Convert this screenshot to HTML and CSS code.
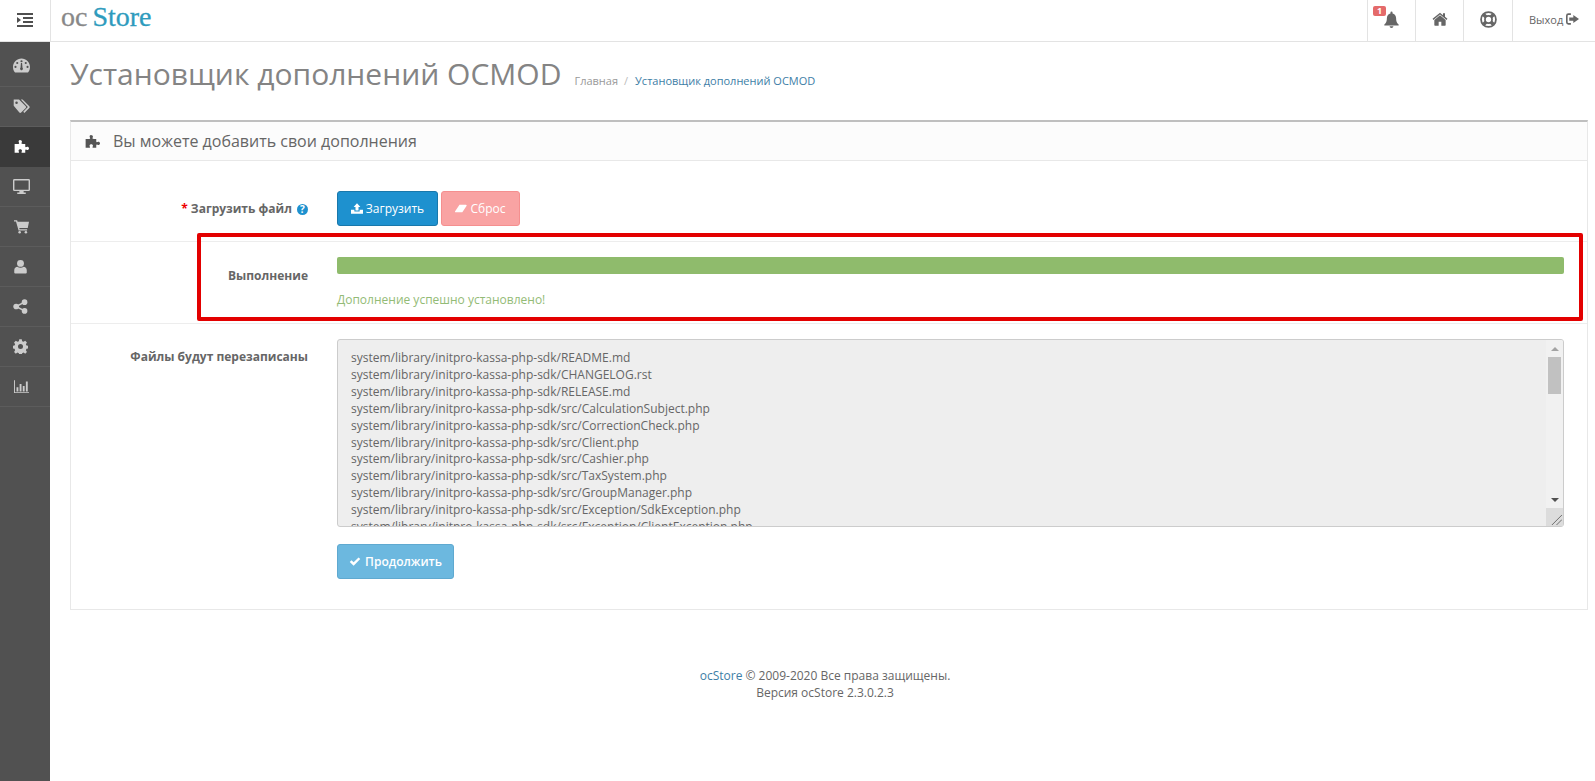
FILE: index.html
```html
<!DOCTYPE html>
<html lang="ru">
<head>
    <meta charset="UTF-8">
    <title>Установщик дополнений OCMOD</title>
    <link rel="stylesheet" href="styles.css">
</head>
<body>

    <header class="topbar">
        <div class="menu-toggle">
            <svg class="icon-toggle" viewBox="0 0 16 14"><path d="M0 0h16v2H0zM6 4h10v2H6zM6 8h10v2H6zM0 12h16v2H0zM0 4l4 3-4 3z"/></svg>
        </div>
        <div class="logo"><span class="logo-oc">oc</span><span class="logo-store">Store</span></div>
        <ul class="top-nav">
            <li class="top-item top-bell">
                <span class="badge">1</span>
                <svg class="icon-top" viewBox="0 0 24 24"><path d="M12 24c1.500 0 2.600-1.100 2.600-2.400H9.400C9.400 22.900 10.500 24 12 24zM22 19c-1.800-1.600-3.500-3.500-3.500-9 0-3.400-2.300-5.800-5-6.500V2.300a1.500 1.500 0 0 0-3 0v1.200c-2.700.7-5 3.100-5 6.500 0 5.500-1.700 7.400-3.500 9-.5.500-.2 1.400.5 1.400h19c.7 0 1-.9.500-1.400z"/></svg>
            </li>
            <li class="top-item top-home">
                <svg class="icon-top" viewBox="0 0 24 24"><path d="M12 6.500 3.500 13.500V21a1 1 0 0 0 1 1h5.500v-6h4v6h5.500a1 1 0 0 0 1-1v-7.500z"/><path d="M12 2.500 0.800 11.800l1.400 1.700L12 5.400l9.800 8.100 1.400-1.700L19.500 8.700V3.500h-3v2.700z"/></svg>
            </li>
            <li class="top-item top-help">
                <svg class="icon-top icon-ring" viewBox="0 0 24 24"><circle cx="12" cy="12" r="10.500" stroke-width="2.500"/><circle cx="12" cy="12" r="5" stroke-width="2.500"/><path d="M5 5l3.500 3.500M19 5l-3.500 3.500M5 19l3.500-3.500M19 19l-3.500-3.500" stroke-width="5"/></svg>
            </li>
            <li class="top-item top-logout">
                <span>Выход</span>
                <svg class="icon-logout" viewBox="0 0 16 14"><path d="M6 0v2H3a1 1 0 0 0-1 1v8a1 1 0 0 0 1 1h3v2H3a3 3 0 0 1-3-3V3a3 3 0 0 1 3-3zM9 2l7 5-7 5V9H4V5h5z"/></svg>
            </li>
        </ul>
    </header>

    <div class="wrapper">
        <nav class="sidebar">
            <a class="side-item side-first">
                <svg class="icon-side" viewBox="0 0 24 20"><path fill-rule="evenodd" d="M12 0C5.400 0 0 5.400 0 12c0 2.900 1 5.600 2.600 7.600a1 1 0 0 0 .8.400h17.200a1 1 0 0 0 .8-.4C23 17.600 24 14.900 24 12 24 5.400 18.600 0 12 0zM12 2.500a1.500 1.500 0 1 1 0 3 1.500 1.500 0 0 1 0-3zM6 5a1.500 1.500 0 1 1 0 3 1.500 1.500 0 0 1 0-3zM18 5a1.500 1.500 0 1 1 0 3 1.500 1.500 0 0 1 0-3zM3.500 10.500a1.500 1.500 0 1 1 0 3 1.500 1.500 0 0 1 0-3zM20.500 10.500a1.500 1.500 0 1 1 0 3 1.500 1.500 0 0 1 0-3zM11.200 6.500h1.600l.6 6.800a2 2 0 1 1-2.800 0z"/></svg>
            </a>
            <a class="side-item">
                <svg class="icon-side" viewBox="0 0 24 20"><path fill-rule="evenodd" d="M1 0h7.500L18 9.500a1.800 1.800 0 0 1 0 2.500L11.500 18.500a1.800 1.800 0 0 1-2.500 0L1 9zM5 3a1.800 1.800 0 1 0 0 3.600A1.800 1.800 0 0 0 5 3z"/><path d="M11 0h2.500L23 9.500a1.800 1.800 0 0 1 0 2.500L16 19l-1.500-1.500 6.500-6.700z"/></svg>
            </a>
            <a class="side-item side-active">
                <svg class="icon-side" viewBox="0 0 24 24"><path d="M9.500 1.500c2 0 3.200 1.300 3.200 2.800 0 1-.8 1.600-.8 2.600 0 .5.900 1 2 1H18v4.200c0 .8.500 1.100 1 1.100.8 0 1.200-.7 2.300-.7 1.500 0 2.700 1.100 2.700 2.500s-1.200 2.500-2.700 2.500c-1.100 0-1.500-.7-2.300-.7-.5 0-1 .3-1 1.100V22h-5c-.6 0-1-.4-1-1 0-.8.700-1.200.7-2.200 0-1.300-1.200-2.300-2.700-2.300s-2.700 1-2.700 2.300c0 1 .7 1.400.7 2.200 0 .6-.4 1-1 1H1V8h5.300c1.200 0 2-.5 2-1.100 0-1-.9-1.600-.9-2.600C7.400 2.800 8 1.500 9.500 1.500z"/></svg>
            </a>
            <a class="side-item">
                <svg class="icon-side" viewBox="0 0 24 21"><path fill-rule="evenodd" d="M2 0h20a2 2 0 0 1 2 2v13a2 2 0 0 1-2 2h-7v2h3v2H6v-2h3v-2H2a2 2 0 0 1-2-2V2a2 2 0 0 1 2-2zM2 2v13h20V2z"/></svg>
            </a>
            <a class="side-item">
                <svg class="icon-side" viewBox="0 0 24 24"><path d="M0 2h5l.8 2.500H24l-2 10H8.500l.4 1.800H21v2H7.300L3.200 4H0z"/><circle cx="9" cy="21" r="2"/><circle cx="19" cy="21" r="2"/></svg>
            </a>
            <a class="side-item">
                <svg class="icon-side icon-narrow" viewBox="0 0 24 24"><circle cx="12" cy="7" r="5.500"/><path d="M2 22v-4c0-3.500 2.500-5.500 5-5.500 1.300 1 3 1.500 5 1.500s3.700-.5 5-1.500c2.500 0 5 2 5 5.500v4a1.500 1.500 0 0 1-1.500 1h-17A1.500 1.500 0 0 1 2 22z"/></svg>
            </a>
            <a class="side-item">
                <svg class="icon-side icon-narrow" viewBox="0 0 24 24"><circle cx="5" cy="12" r="4.500"/><circle cx="18.500" cy="5" r="4.500"/><circle cx="18.500" cy="19" r="4.500"/><path d="M5 12 18.500 5M5 12l13.500 7" stroke="#ccc" stroke-width="2.500"/></svg>
            </a>
            <a class="side-item">
                <svg class="icon-side icon-narrow" viewBox="0 0 24 24"><path fill-rule="evenodd" d="M10 1h4l.6 3 2.300 1 2.600-1.700 2.800 2.800-1.700 2.600 1 2.300 3 .6v4l-3 .6-1 2.300 1.700 2.600-2.800 2.800-2.600-1.700-2.300 1-.6 3h-4l-.6-3-2.300-1-2.600 1.700-2.800-2.800 1.700-2.600-1-2.300-3-.6v-4l3-.6 1-2.300-1.700-2.600 2.800-2.800 2.600 1.700 2.300-1zM12 8.500a4 4 0 1 0 0 8 4 4 0 0 0 0-8z" transform="translate(0 -.5)"/></svg>
            </a>
            <a class="side-item">
                <svg class="icon-side" viewBox="0 0 24 24"><path d="M0 2h1.500v19H24v1.500H0zM4 13h3v7H4zM9 8h3v12H9zM14 11h3v9h-3zM19 4h3v16h-3z"/></svg>
            </a>
        </nav>

        <main class="content">
            <div class="page-header">
                <h1>Установщик дополнений OCMOD</h1>
                <ul class="breadcrumb">
                    <li>Главная</li>
                    <li class="crumb-sep">/</li>
                    <li class="crumb-link">Установщик дополнений OCMOD</li>
                </ul>
            </div>

            <section class="panel">
                <div class="panel-heading">
                    <svg class="icon-panel" viewBox="0 0 24 24"><path d="M9.500 1.500c2 0 3.200 1.300 3.200 2.800 0 1-.8 1.600-.8 2.600 0 .5.900 1 2 1H18v4.200c0 .8.500 1.100 1 1.100.8 0 1.200-.7 2.300-.7 1.500 0 2.700 1.100 2.700 2.500s-1.200 2.500-2.700 2.500c-1.100 0-1.500-.7-2.300-.7-.5 0-1 .3-1 1.100V22h-5c-.6 0-1-.4-1-1 0-.8.700-1.200.7-2.200 0-1.300-1.200-2.300-2.700-2.300s-2.700 1-2.700 2.300c0 1 .7 1.400.7 2.200 0 .6-.4 1-1 1H1V8h5.300c1.200 0 2-.5 2-1.100 0-1-.9-1.600-.9-2.600C7.400 2.800 8 1.500 9.500 1.500z"/></svg>
                    <h3>Вы можете добавить свои дополнения</h3>
                </div>

                <div class="form-row form-row-upload">
                    <div class="form-label"><span class="required">*</span> Загрузить файл <span class="help">?</span></div>
                    <div class="form-control">
                        <div class="btn-group">
                            <button class="btn btn-primary" type="button">
                                <svg class="icon-btn" viewBox="0 0 16 14"><path d="M8 0l4.500 5H10v4.500H6V5H3.500zM0 8.500h4.500v2.500h7V8.500H16V14H0z"/></svg>
                                Загрузить
                            </button>
                            <button class="btn btn-danger" type="button">
                                <svg class="icon-btn" viewBox="0 0 16 14"><path d="M6 2h8.500a1 1 0 0 1 .8 1.500L10 11.500a1 1 0 0 1-.8.500H1a1 1 0 0 1-.8-1.500z"/></svg>
                                Сброс
                            </button>
                        </div>
                    </div>
                </div>

                <div class="form-row form-row-progress">
                    <div class="form-label">Выполнение</div>
                    <div class="form-control">
                        <div class="progress"></div>
                        <div class="progress-text">Дополнение успешно установлено!</div>
                    </div>
                </div>

                <div class="form-row form-row-files">
                    <div class="form-label">Файлы будут перезаписаны</div>
                    <div class="form-control">
                        <div class="file-box">
                            <textarea class="file-list" readonly>system/library/initpro-kassa-php-sdk/README.md
system/library/initpro-kassa-php-sdk/CHANGELOG.rst
system/library/initpro-kassa-php-sdk/RELEASE.md
system/library/initpro-kassa-php-sdk/src/CalculationSubject.php
system/library/initpro-kassa-php-sdk/src/CorrectionCheck.php
system/library/initpro-kassa-php-sdk/src/Client.php
system/library/initpro-kassa-php-sdk/src/Cashier.php
system/library/initpro-kassa-php-sdk/src/TaxSystem.php
system/library/initpro-kassa-php-sdk/src/GroupManager.php
system/library/initpro-kassa-php-sdk/src/Exception/SdkException.php
system/library/initpro-kassa-php-sdk/src/Exception/ClientException.php
system/library/initpro-kassa-php-sdk/src/Exception/NetworkException.php
system/library/initpro-kassa-php-sdk/src/Exception/ServerException.php</textarea>
                            <div class="scrollbar">
                                <div class="scroll-btn"><span class="arrow-up"></span></div>
                                <div class="scroll-thumb"></div>
                                <div class="scroll-btn scroll-btn-down"><span class="arrow-down"></span></div>
                                <div class="scroll-corner">
                                    <svg class="icon-grip" viewBox="0 0 12 12"><path d="M1 12 12 1M6 12l6-6"/></svg>
                                </div>
                            </div>
                        </div>
                        <button class="btn btn-continue" type="button">
                            <svg class="icon-btn" viewBox="0 0 16 14"><path d="M1 7.500l2.300-2.300 2.900 2.900 6.500-6.600L15 3.800 6.200 12.600z"/></svg>
                            Продолжить
                        </button>
                    </div>
                </div>

                <div class="highlight"></div>
            </section>

            <footer class="footer">
                <a>ocStore</a> © 2009-2020 Все права защищены.<br>Версия ocStore 2.3.0.2.3
            </footer>
        </main>
    </div>

</body>
</html>
```

FILE: styles.css
```css
* {
    box-sizing: border-box;
}

body {
    margin: 0;
    font-family: 'Open Sans', sans-serif;
    font-size: 12px;
    line-height: 17px;
    color: #666;
    background-color: #fff;
    overflow: hidden;
}

ul {
    list-style: none;
    margin: 0;
    padding: 0;
}

svg {
    fill: currentColor;
    flex-shrink: 0;
}

/* top bar */
.topbar {
    display: flex;
    align-items: stretch;
    height: 42px;
    border-bottom: 1px solid #e3e3e3;
}

.menu-toggle {
    width: 51px;
    border-right: 1px solid #e3e3e3;
    display: flex;
    align-items: center;
    justify-content: center;
    padding-bottom: 2px;
    color: #4f4f4f;
}

.icon-toggle {
    width: 16px;
    height: 14px;
}

.logo {
    padding-left: 10px;
    font-family: 'Liberation Serif', serif;
    font-size: 28px;
    line-height: 33px;
}

.logo-oc {
    color: #888;
    margin-right: 5px;
    -webkit-text-stroke: 0.3px #888;
}

.logo-store {
    color: #2e9bbd;
    -webkit-text-stroke: 0.3px #2e9bbd;
}

.top-nav {
    display: flex;
    margin-left: auto;
}

.top-item {
    position: relative;
    display: flex;
    align-items: center;
    justify-content: center;
    padding-bottom: 3px;
    border-left: 1px solid #e3e3e3;
    color: #666;
}

.top-bell {
    width: 48px;
}

.top-home {
    width: 48px;
}

.top-help {
    width: 49px;
}

.top-logout {
    width: 83px;
    gap: 3px;
    justify-content: flex-start;
    padding-left: 16px;
    font-size: 11px;
}

.icon-top {
    width: 16px;
    height: 16px;
}

.top-bell .icon-top {
    width: 17px;
    height: 17px;
}

.top-help .icon-top {
    width: 17px;
    height: 17px;
}

.icon-ring {
    fill: none;
    stroke: #666;
}

.icon-logout {
    width: 13px;
    height: 12px;
}

.badge {
    position: absolute;
    left: 5px;
    top: 6px;
    width: 13px;
    height: 10px;
    border-radius: 2px;
    background-color: #e46a6a;
    color: #fff;
    font-size: 9px;
    font-weight: 700;
    line-height: 10px;
    text-align: center;
    z-index: 1;
}

/* sidebar */
.wrapper {
    display: flex;
    height: 739px;
}

.sidebar {
    width: 50px;
    background-color: #515151;
    flex-shrink: 0;
}

.side-item {
    display: flex;
    align-items: center;
    height: 40px;
    padding-left: 13px;
    border-bottom: 1px solid #5c5c5c;
    color: #ccc;
}

.side-first {
    height: 45px;
    padding-top: 3px;
}

.side-active {
    background-color: #3a3a3a;
    color: #fff;
    border-bottom-color: #3a3a3a;
}

.icon-side {
    width: 17px;
    height: 15px;
}

.icon-narrow {
    width: 15px;
}

/* content */
.content {
    flex: 1;
    padding: 0 7px 0 20px;
    min-width: 0;
}

.page-header {
    display: flex;
    align-items: baseline;
    height: 78px;
    padding-top: 11px;
}

.page-header h1 {
    margin: 0;
    font-size: 30px;
    font-weight: 400;
    line-height: 42px;
    color: #848484;
}

.breadcrumb {
    display: flex;
    gap: 6px;
    margin-left: 13px;
    font-size: 11px;
    color: #999;
}

.crumb-sep {
    color: #bbb;
}

.crumb-link {
    color: #3d7ea6;
    margin-left: 1px;
}

.panel {
    position: relative;
    border: 1px solid #e8e8e8;
    border-top: 2px solid #bfbfbf;
    height: 490px;
}

.panel-heading {
    display: flex;
    align-items: center;
    gap: 13px;
    height: 39px;
    padding-left: 14px;
    background-color: #fcfcfc;
    border-bottom: 1px solid #e8e8e8;
    color: #555;
}

.icon-panel {
    width: 15px;
    height: 15px;
}

.panel-heading h3 {
    margin: 0;
    font-size: 16px;
    font-weight: 400;
    color: #666;
}

.form-row {
    display: flex;
    border-top: 1px solid #ededed;
}

.form-row-upload {
    height: 80px;
    padding-top: 30px;
    border-top: none;
}

.form-row-progress {
    height: 82px;
    padding-top: 15px;
}

.form-row-files {
    padding-top: 15px;
}

.form-label {
    width: 237px;
    flex-shrink: 0;
    padding-top: 9px;
    text-align: right;
    font-size: 12px;
    font-weight: 700;
    color: #666;
}

.form-row-progress .form-label {
    padding-top: 10px;
}

.required {
    color: #e00;
}

.help {
    display: inline-block;
    width: 11px;
    height: 11px;
    margin-left: 2px;
    border-radius: 50%;
    background-color: #1e91cf;
    color: #fff;
    font-size: 10px;
    line-height: 11px;
    text-align: center;
}

.form-control {
    flex: 1;
    min-width: 0;
    margin-left: 29px;
    margin-right: 23px;
}

.btn-group {
    display: flex;
    gap: 3px;
}

.btn {
    display: flex;
    align-items: center;
    justify-content: center;
    gap: 3px;
    height: 35px;
    padding: 0;
    font-family: 'Open Sans', sans-serif;
    font-size: 12px;
    color: #fff;
    border-radius: 3px;
    border: 1px solid;
}

.btn-primary {
    width: 101px;
    background-color: #1e91cf;
    border-color: #1978ab;
}

.btn-danger {
    width: 79px;
    background-color: #f9a3a3;
    border-color: #f58f8f;
}

.btn-continue {
    width: 117px;
    margin-top: 17px;
    gap: 4px;
    font-weight: 600;
    background-color: #6cb8df;
    border-color: #5fa9d0;
}

.icon-btn {
    width: 12px;
    height: 11px;
}

.progress {
    height: 17px;
    border-radius: 2px;
    background-color: #8fbb6c;
}

.progress-text {
    margin-top: 17px;
    font-size: 12px;
    color: #93bb76;
}

.file-box {
    position: relative;
    height: 188px;
}

.file-list {
    display: block;
    width: 100%;
    height: 100%;
    padding: 10px 13px;
    font-family: 'Open Sans', sans-serif;
    font-size: 12px;
    line-height: 16.9px;
    color: #666;
    background-color: #eee;
    border: 1px solid #ccc;
    border-radius: 3px;
    overflow: hidden;
    outline: none;
    resize: none;
    white-space: pre;
}

/* the window scrollbar, drawn over the textarea */
.scrollbar {
    position: absolute;
    top: 1px;
    right: 1px;
    bottom: 1px;
    width: 17px;
    display: flex;
    flex-direction: column;
    background-color: #f1f1f1;
    border-radius: 0 2px 2px 0;
}

.scroll-btn {
    display: flex;
    align-items: center;
    justify-content: center;
    height: 17px;
    flex-shrink: 0;
}

.scroll-btn-down {
    margin-top: auto;
}

.arrow-up {
    border-left: 4px solid transparent;
    border-right: 4px solid transparent;
    border-bottom: 4px solid #a3a3a3;
}

.arrow-down {
    border-left: 4px solid transparent;
    border-right: 4px solid transparent;
    border-top: 4px solid #505050;
}

.scroll-thumb {
    width: 13px;
    height: 37px;
    margin: 0 2px;
    background-color: #c1c1c1;
}

.scroll-corner {
    display: flex;
    align-items: flex-end;
    justify-content: flex-end;
    height: 18px;
    flex-shrink: 0;
    background-color: #dcdcdc;
}

.icon-grip {
    width: 11px;
    height: 11px;
    margin: 0 1px 1px 0;
    fill: none;
    stroke: #666;
    stroke-width: 1;
}

/* red frame drawn over the progress row */
.highlight {
    position: absolute;
    left: 126px;
    top: 111px;
    width: 1386px;
    height: 88px;
    border: 4px solid #e30000;
    border-radius: 2px;
}

.footer {
    margin-top: 57px;
    padding-right: 8px;
    text-align: center;
    color: #666;
}

.footer a {
    color: #3d7ea6;
}
```
